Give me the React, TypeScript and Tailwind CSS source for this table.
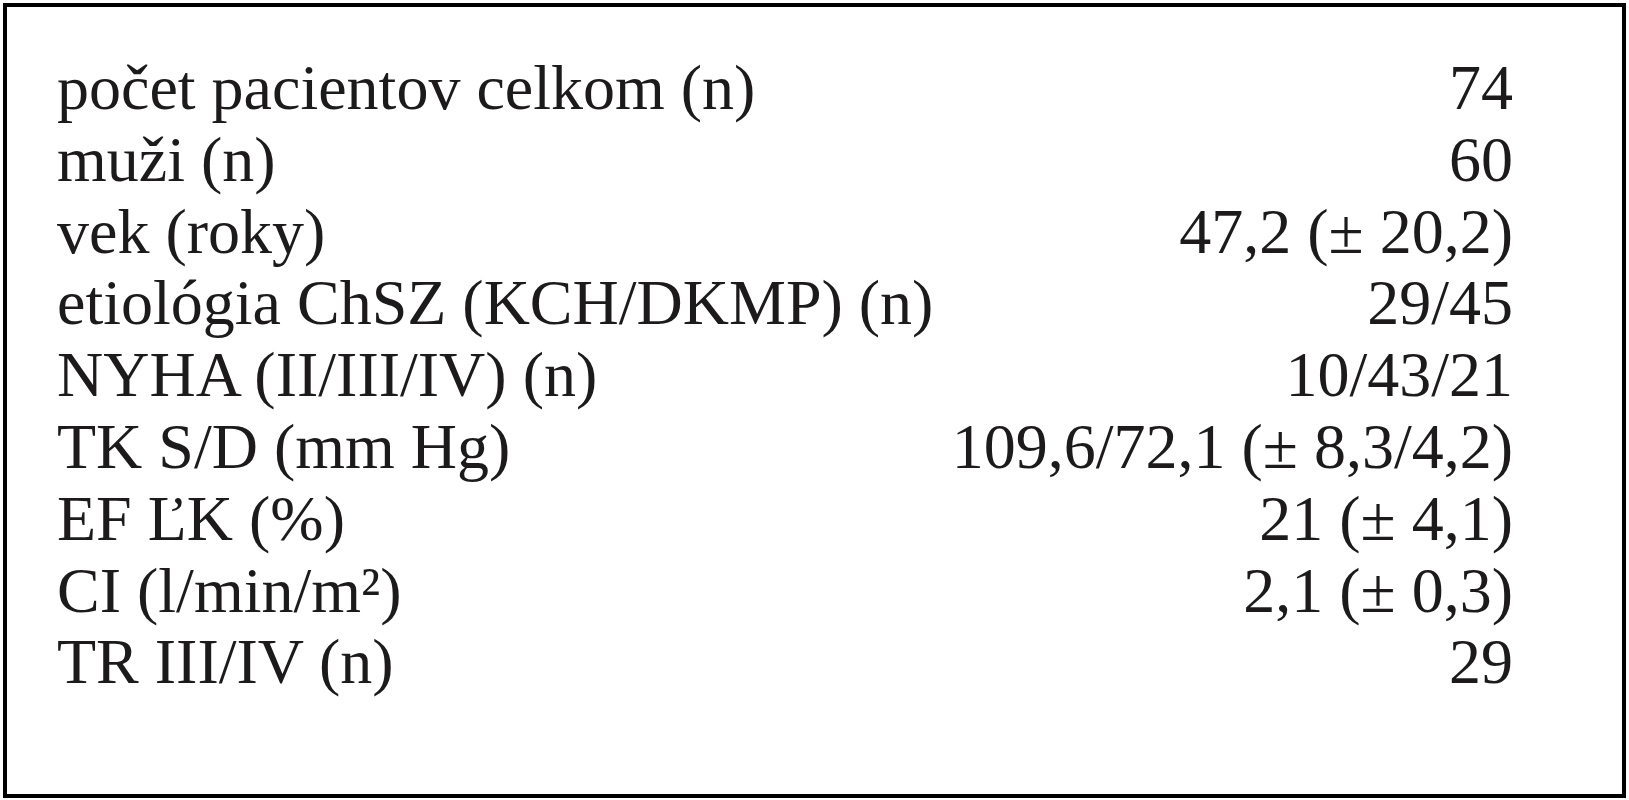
const rows: [string, string][] = [
  ['počet pacientov celkom (n)', '74'],
  ['muži (n)', '60'],
  ['vek (roky)', '47,2 (± 20,2)'],
  ['etiológia ChSZ (KCH/DKMP) (n)', '29/45'],
  ['NYHA (II/III/IV) (n)', '10/43/21'],
  ['TK S/D (mm Hg)', '109,6/72,1 (± 8,3/4,2)'],
  ['EF ĽK (%)', '21 (± 4,1)'],
  ['CI (l/min/m²)', '2,1 (± 0,3)'],
  ['TR III/IV (n)', '29'],
];

export default function App() {
  return (
    <div className="w-[1629px] h-[800px] bg-white p-[3px]">
      <div
        className="h-[795px] w-[1623px] border-4 border-black pl-[50px] pr-[109px] pt-[45px] text-[64px] leading-[71.8px] text-[#1c1a1a]"
        style={{ fontFamily: '"Liberation Serif", "DejaVu Serif", serif' }}
      >
        {rows.map(([label, value]) => (
          <div key={label} className="flex justify-between whitespace-nowrap">
            <span>{label}</span>
            <span>{value}</span>
          </div>
        ))}
      </div>
    </div>
  );
}
